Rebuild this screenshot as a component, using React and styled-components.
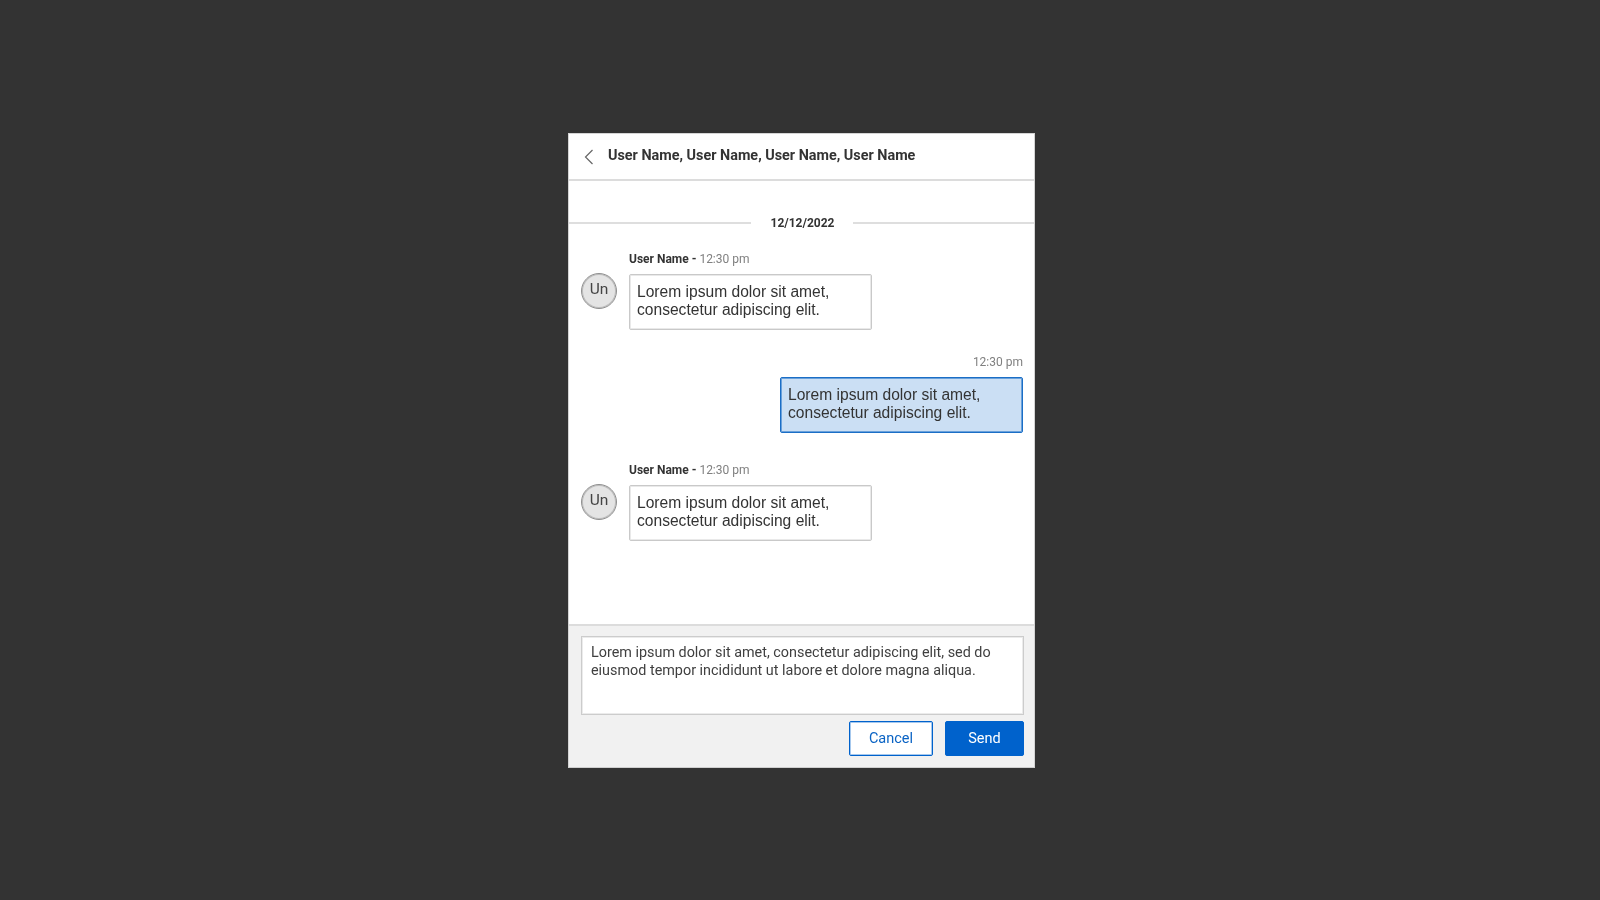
import React from "react";
import styled, { createGlobalStyle } from "styled-components";

const Global = createGlobalStyle`
  html, body { margin: 0; padding: 0; height: 100%; background: #333333; }
  #root { height: 100%; }
  * { box-sizing: border-box; }
`;

const Stage = styled.div`
  width: 1600px;
  height: 900px;
  background: #333333;
  padding: 133px 0 0 568px;
  font-family: Roboto, sans-serif;
`;

const Card = styled.main`
  width: 467px;
  height: 635px;
  background: #ffffff;
  border: 1px solid #d4d4d4;
  border-bottom-color: #cfcfcf;
  display: flex;
  flex-direction: column;
  filter: blur(0.35px);
`;

const Header = styled.header`
  height: 47px;
  flex: none;
  display: flex;
  align-items: flex-start;
  border-bottom: 2px solid #dcdcdc;
  padding: 13px 0 0 15px;
`;

const BackIcon = styled.svg`
  width: 10px;
  height: 16px;
  margin: 2px 14px 0 0;
  flex: none;
`;

const Title = styled.h1`
  margin: 0;
  font-size: 14.38px;
  line-height: 18px;
  font-weight: 700;
  color: #333333;
  white-space: nowrap;
`;

const Thread = styled.section`
  flex: 1;
  display: flex;
  flex-direction: column;
  padding-top: 34px;
`;

const DateRow = styled.div`
  display: flex;
  align-items: center;
  height: 16px;
  margin-bottom: 20px;
`;

const Rule = styled.span`
  flex: 1;
  height: 2px;
  background: #dedede;
`;

const DateLabel = styled.span`
  width: 102px;
  padding-left: 2px;
  text-align: center;
  font-size: 12px;
  font-weight: 700;
  color: #333333;
`;

const Incoming = styled.article`
  display: grid;
  grid-template-columns: 36px 243px;
  column-gap: 12px;
  padding-left: 12px;
  margin-bottom: 24px;
`;

const Meta = styled.div`
  grid-column: 2;
  height: 16px;
  margin-bottom: 7px;
  font-size: 12px;
  line-height: 16px;
  color: #808080;
  white-space: nowrap;

  b {
    font-weight: 700;
    color: #333333;
  }
`;

const Avatar = styled.div`
  width: 36px;
  height: 36px;
  margin-top: -1px;
  border-radius: 50%;
  background: #e4e4e4;
  border: 1px solid #8f8f8f;
  box-shadow: inset 0 0 0 1px rgba(143, 143, 143, 0.45);
  display: flex;
  justify-content: center;
  padding-top: 5px;
  font-size: 15.5px;
  line-height: 20px;
  color: #444444;
`;

const Bubble = styled.div`
  width: 243px;
  height: 56px;
  padding: 8px 7px;
  font-family: "Liberation Sans", Arial, sans-serif;
  font-size: 15.6px;
  line-height: 18px;
  color: #333333;
  background: ${(p) => (p.$own ? "#cbdff4" : "#ffffff")};
  border: 1px solid ${(p) => (p.$own ? "#1b6ec6" : "#c9c9c9")};
  box-shadow: inset 0 0 0 1px ${(p) => (p.$own ? "rgba(27, 110, 198, 0.55)" : "rgba(201, 201, 201, 0.4)")};
  border-radius: 2px;
`;

const Outgoing = styled.article`
  display: flex;
  flex-direction: column;
  align-items: flex-end;
  padding-right: 11px;
  margin-bottom: 29px;
`;

const OwnTime = styled.div`
  height: 16px;
  margin-bottom: 7px;
  font-size: 12px;
  line-height: 16px;
  color: #808080;
`;

const Composer = styled.footer`
  height: 143px;
  flex: none;
  background: #f1f1f1;
  border-top: 2px solid #dcdcdc;
  padding: 10px 10px 0 12px;
  display: flex;
  flex-direction: column;
`;

const Input = styled.div`
  height: 79px;
  background: #ffffff;
  border: 1px solid #cccccc;
  box-shadow: inset 0 0 0 1px rgba(204, 204, 204, 0.4);
  padding: 7px 9px;
  font-size: 14.39px;
  line-height: 18px;
  color: #404040;
`;

const Actions = styled.div`
  display: flex;
  justify-content: flex-end;
  gap: 12px;
  margin-top: 6px;
`;

const Button = styled.button`
  height: 35px;
  width: ${(p) => (p.$primary ? "79px" : "84px")};
  padding: 0;
  font-family: Roboto, sans-serif;
  font-size: 14.5px;
  font-weight: ${(p) => (p.$primary ? 450 : 400)};
  color: ${(p) => (p.$primary ? "#ffffff" : "#0a63c4")};
  background: ${(p) => (p.$primary ? "#0062cc" : "#ffffff")};
  border: 1px solid #0062cc;
  box-shadow: inset 0 0 0 1px ${(p) => (p.$primary ? "#0062cc" : "rgba(0, 98, 204, 0.35)")};
  border-radius: 2px;
`;

const lorem = (
  <>
    Lorem ipsum dolor sit amet,
    <br />
    consectetur adipiscing elit.
  </>
);

const IncomingMessage = () => (
  <Incoming>
    <Meta>
      <b>User Name -</b> 12:30 pm
    </Meta>
    <Avatar>Un</Avatar>
    <Bubble>{lorem}</Bubble>
  </Incoming>
);

export default function App() {
  return (
    <>
      <Global />
      <Stage>
        <Card>
          <Header>
            <BackIcon viewBox="0 0 10 16" fill="none" stroke="#666666" strokeWidth="1.2">
              <path d="M8.5 1 L1.5 8 L8.5 15" />
            </BackIcon>
            <Title>User Name, User Name, User Name, User Name</Title>
          </Header>
          <Thread>
            <DateRow>
              <Rule />
              <DateLabel>12/12/2022</DateLabel>
              <Rule />
            </DateRow>
            <IncomingMessage />
            <Outgoing>
              <OwnTime>12:30 pm</OwnTime>
              <Bubble $own>{lorem}</Bubble>
            </Outgoing>
            <IncomingMessage />
          </Thread>
          <Composer>
            <Input>
              Lorem ipsum dolor sit amet, consectetur adipiscing elit, sed do eiusmod tempor incididunt ut labore et dolore magna aliqua.
            </Input>
            <Actions>
              <Button>Cancel</Button>
              <Button $primary>Send</Button>
            </Actions>
          </Composer>
        </Card>
      </Stage>
    </>
  );
}
